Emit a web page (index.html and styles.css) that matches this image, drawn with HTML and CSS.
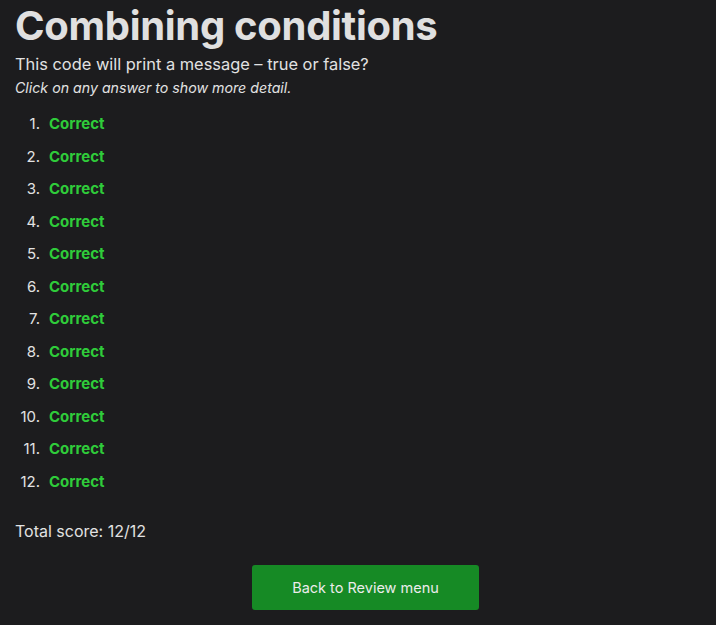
FILE: index.html
```html
<!DOCTYPE html>
<html>
<head>
<meta charset="utf-8">
<link rel="stylesheet" href="styles.css">
</head>
<body>
<main class="page">
  <h1 class="title">Combining conditions</h1>
  <p class="subtitle">This code will print a message – true or false?</p>
  <p class="hint">Click on any answer to show more detail.</p>
  <ol class="answers">
    <li><span class="correct">Correct</span></li>
    <li><span class="correct">Correct</span></li>
    <li><span class="correct">Correct</span></li>
    <li><span class="correct">Correct</span></li>
    <li><span class="correct">Correct</span></li>
    <li><span class="correct">Correct</span></li>
    <li><span class="correct">Correct</span></li>
    <li><span class="correct">Correct</span></li>
    <li><span class="correct">Correct</span></li>
    <li><span class="correct">Correct</span></li>
    <li><span class="correct">Correct</span></li>
    <li><span class="correct">Correct</span></li>
  </ol>
  <p class="score">Total score: 12/12</p>
  <div class="actions">
    <button class="back-btn">Back to Review menu</button>
  </div>
</main>
</body>
</html>
```
FILE: styles.css
```css
html, body {
  margin: 0;
  padding: 0;
  background: #1c1c1e;
  color: #e2e2e2;
  font-family: Inter, "Noto Sans", sans-serif;
}
.page {
  padding: 0 0 0 15px;
}
.title {
  margin: 0;
  padding-top: 4px;
  font-size: 40px;
  font-weight: 700;
  line-height: 44px;
  color: #e0e0e0;
  letter-spacing: -0.3px;
}
.subtitle {
  margin: 5px 0 0;
  font-size: 16.4px;
  line-height: 22px;
}
.hint {
  margin: 3px 0 0;
  font-size: 14.2px;
  font-style: italic;
  line-height: 20px;
}
.answers {
  margin: 16px 0 0;
  padding: 0;
  list-style: none;
  counter-reset: item;
}
.answers li {
  display: flex;
  align-items: baseline;
  gap: 9px;
  height: 32.5px;
  line-height: 20px;
  counter-increment: item;
}
.answers li::before {
  content: counter(item) ".";
  width: 25px;
  text-align: right;
  font-size: 15px;
  color: #e2e2e2;
}
.correct {
  color: #2fcc3a;
  font-weight: 700;
  font-size: 15px;
}
.score {
  margin: 16px 0 0;
  font-size: 16px;
  line-height: 22px;
}
.actions {
  display: flex;
  justify-content: center;
  margin-top: 23px;
}
.back-btn {
  width: 227px;
  height: 45px;
  border: none;
  border-radius: 3px;
  background: #168a25;
  color: #ececec;
  font-family: Inter, "Noto Sans", sans-serif;
  font-size: 14.5px;
}
```
